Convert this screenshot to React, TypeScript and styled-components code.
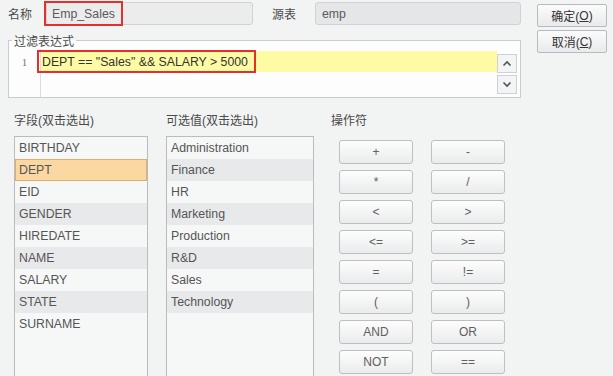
import styled, { createGlobalStyle } from "styled-components";

const GlobalStyle = createGlobalStyle`
    body {
        margin: 0;
        background: #f2f4f4;
        font-family: "Liberation Sans", "Noto Sans CJK SC", sans-serif;
        font-size: 12px;
        color: #444;
    }
`
const Page = styled.div`
    width: 613px;
    height: 376px;
    overflow: hidden;
    padding-top: 2px;
    box-sizing: border-box;
    background: #f2f4f4;
`
const Header = styled.div`
    display: flex;
    align-items: flex-start;
`
const Main = styled.div`
    width: 521px;
    display: flex;
    flex-direction: column;
`
const TopRow = styled.div`
    display: flex;
    align-items: center;
    height: 23px;
`
const Label = styled.span<{ $width: number; $indent?: number; $gap?: number }>`
    width: ${p => p.$width}px;
    padding-left: ${p => p.$indent ?? 0}px;
    margin-left: ${p => p.$gap ?? 0}px;
    box-sizing: border-box;
    color: #4a4a4a;
    white-space: nowrap;
`
const Input = styled.div<{ $width: number; $bg: string; $pad: number }>`
    width: ${p => p.$width}px;
    height: 23px;
    box-sizing: border-box;
    border: 1px solid #d0d2d4;
    border-radius: 3px;
    background: ${p => p.$bg};
    display: flex;
    align-items: center;
    padding-left: ${p => p.$pad}px;
    color: #5a5a5a;
    font-size: 12.3px;
`
// red annotation box drawn round a piece of text
const Marked = styled.span<{ $pad: string; $height: number; $shift: number }>`
    display: inline-flex;
    align-items: center;
    height: ${p => p.$height}px;
    box-sizing: border-box;
    border: 2px solid #e2302c;
    padding: ${p => p.$pad};
    margin-left: ${p => p.$shift}px;
    white-space: nowrap;
`
const Fieldset = styled.fieldset`
    margin: 7px 0 0 8px;
    padding: 0 3px 0 0;
    width: 513px;
    min-width: 0;
    box-sizing: border-box;
    border: 1px solid #c9cbcd;
    background: #fdfdfd;
`
const Legend = styled.legend`
    margin-left: 3px;
    padding: 3px 2px 0;
    line-height: 14px;
    color: #4a4a4a;
`
const Editor = styled.div`
    display: flex;
    height: 48px;
`
const Gutter = styled.div`
    width: 31px;
    border-right: 1px solid #dcdcdc;
    padding-top: 2px;
`
const LineNo = styled.div`
    height: 21px;
    display: flex;
    align-items: center;
    justify-content: center;
    font-family: "Liberation Serif", serif;
    font-size: 11px;
    color: #777;
`
const Code = styled.div`
    flex: 1;
    padding-top: 2px;
    min-width: 0;
`
const CodeLine = styled.div`
    height: 21px;
    background: #fffba4;
    display: flex;
    align-items: center;
    color: #333;
    font-size: 12.3px;
`
const ScrollBar = styled.div`
    width: 20px;
    padding-top: 5px;
    display: flex;
    flex-direction: column;
    gap: 2px;
`
const ScrollButton = styled.div`
    height: 19px;
    box-sizing: border-box;
    border: 1px solid #cfd1d3;
    background: #f3f4f5;
    display: flex;
    align-items: center;
    justify-content: center;
`
const Actions = styled.div`
    margin-left: 16px;
    padding-top: 2px;
    display: flex;
    flex-direction: column;
    gap: 3px;
`
const ActionButton = styled.div`
    width: 70px;
    height: 23px;
    box-sizing: border-box;
    border: 1px solid #b8bbbe;
    border-radius: 2px;
    background: linear-gradient(#fbfbfb, #e9eaeb);
    display: flex;
    align-items: center;
    justify-content: center;
    color: #333;
    u { text-decoration: underline; }
`
const Pickers = styled.div`
    display: flex;
    margin-top: 15px;
    padding-left: 14px;
`
const Column = styled.div<{ $width: number; $gap: number }>`
    width: ${p => p.$width}px;
    margin-right: ${p => p.$gap}px;
    display: flex;
    flex-direction: column;
`
const ColumnTitle = styled.div`
    height: 16px;
    line-height: 16px;
    margin-bottom: 7px;
    color: #4a4a4a;
    white-space: nowrap;
`
const List = styled.div`
    height: 260px;
    border: 1px solid #b9bbbd;
    background: #f6f7f7;
`
const Row = styled.div<{ $alt: boolean; $selected?: boolean }>`
    height: 22px;
    box-sizing: border-box;
    display: flex;
    align-items: center;
    padding-left: ${p => (p.$selected ? 3 : 4)}px;
    background: ${p => (p.$selected ? "#fbd7a2" : p.$alt ? "#e8e9ea" : "#f6f7f7")};
    border: ${p => (p.$selected ? "1px solid #dcae72" : "none")};
    color: #555;
    font-size: 12.3px;
`
const OpGrid = styled.div`
    display: grid;
    grid-template-columns: repeat(2, 74px);
    column-gap: 18px;
    row-gap: 6px;
    padding: 4px 0 0 8px;
`
const OpButton = styled.div`
    height: 24px;
    box-sizing: border-box;
    border: 1px solid #bdbfc1;
    border-radius: 3px;
    background: linear-gradient(#fdfdfd, #eaebec);
    display: flex;
    align-items: center;
    justify-content: center;
    color: #606060;
    font-size: 12px;
`

const fields = ["BIRTHDAY", "DEPT", "EID", "GENDER", "HIREDATE", "NAME", "SALARY", "STATE", "SURNAME"]
const values = ["Administration", "Finance", "HR", "Marketing", "Production", "R&D", "Sales", "Technology"]
const operators = ["+", "-", "*", "/", "<", ">", "<=", ">=", "=", "!=", "(", ")", "AND", "OR", "NOT", "=="]

const Chevron = ({ up }: { up: boolean }) => (
    <svg width="10" height="7" viewBox="0 0 10 7">
        <path d={up ? "M1.5 5.5 L5 2 L8.5 5.5" : "M1.5 1.5 L5 5 L8.5 1.5"} fill="none" stroke="#555" strokeWidth="1.6" />
    </svg>
)

export default function App() {
    return (
        <Page>
            <GlobalStyle />
            <Header>
                <Main>
                    <TopRow>
                        <Label $width={46} $indent={8}>名称</Label>
                        <Input $width={207} $bg="#ececed" $pad={0}>
                            <Marked $pad="0 6px 0 6px" $height={25} $shift={-3}>Emp_Sales</Marked>
                        </Input>
                        <Label $width={43} $gap={19}>源表</Label>
                        <Input $width={206} $bg="#e4e6e8" $pad={6}>emp</Input>
                    </TopRow>
                    <Fieldset>
                        <Legend>过滤表达式</Legend>
                        <Editor>
                            <Gutter><LineNo>1</LineNo></Gutter>
                            <Code>
                                <CodeLine>
                                    <Marked $pad="0 6px 0 3px" $height={23} $shift={-4}>DEPT == "Sales" &amp;&amp; SALARY &gt; 5000</Marked>
                                </CodeLine>
                            </Code>
                            <ScrollBar>
                                <ScrollButton><Chevron up /></ScrollButton>
                                <ScrollButton><Chevron up={false} /></ScrollButton>
                            </ScrollBar>
                        </Editor>
                    </Fieldset>
                </Main>
                <Actions>
                    <ActionButton>确定(<u>O</u>)</ActionButton>
                    <ActionButton>取消(<u>C</u>)</ActionButton>
                </Actions>
            </Header>
            <Pickers>
                <Column $width={134} $gap={18}>
                    <ColumnTitle>字段(双击选出)</ColumnTitle>
                    <List>
                        {fields.map((f, i) => (
                            <Row key={f} $alt={i % 2 === 1} $selected={f === "DEPT"}>{f}</Row>
                        ))}
                    </List>
                </Column>
                <Column $width={148} $gap={17}>
                    <ColumnTitle>可选值(双击选出)</ColumnTitle>
                    <List>
                        {values.map((v, i) => (
                            <Row key={v} $alt={i % 2 === 1}>{v}</Row>
                        ))}
                    </List>
                </Column>
                <Column $width={180} $gap={0}>
                    <ColumnTitle>操作符</ColumnTitle>
                    <OpGrid>
                        {operators.map(op => (
                            <OpButton key={op}>{op}</OpButton>
                        ))}
                    </OpGrid>
                </Column>
            </Pickers>
        </Page>
    )
}
